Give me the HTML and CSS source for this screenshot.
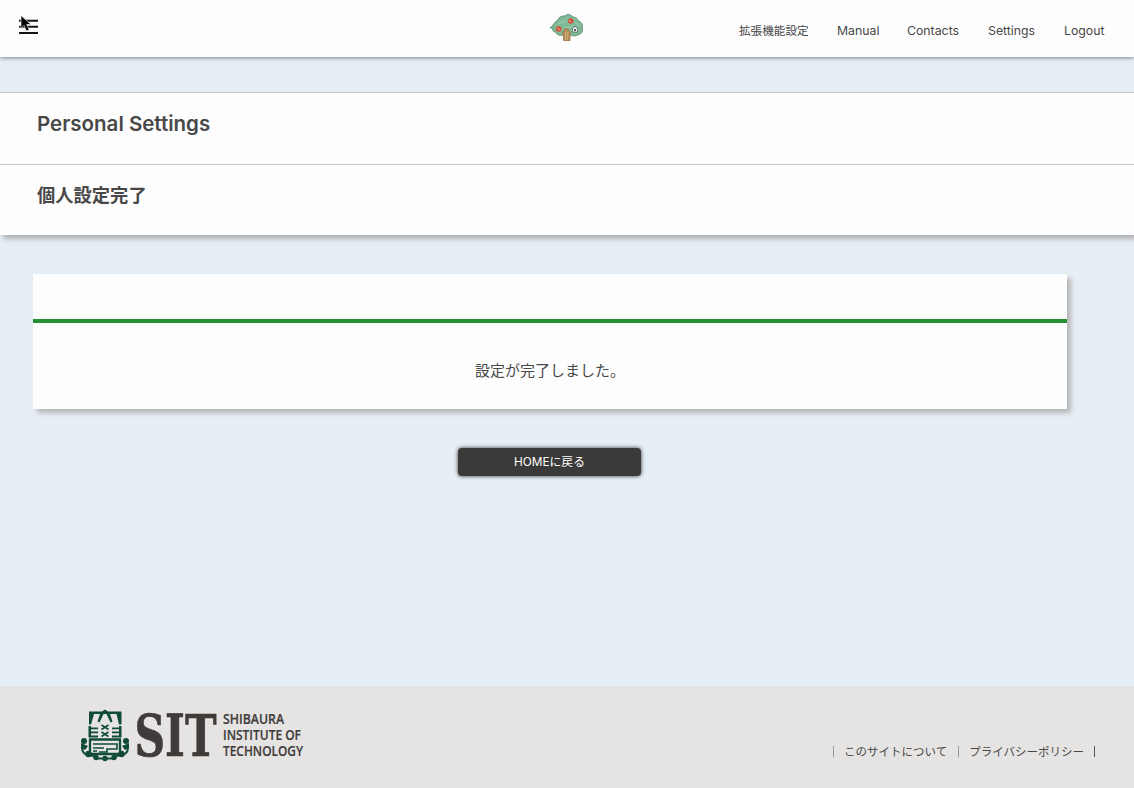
FILE: index.html
```
<!DOCTYPE html>
<html lang="ja">
<head>
<meta charset="utf-8">
<title>Personal Settings</title>
<link rel="stylesheet" href="styles.css">
</head>
<body>
<header class="topbar">
  <button class="menu" aria-label="Menu">
    <svg width="32" height="32" viewBox="0 0 32 32">
      <path d="M7 9.7H26M7 15.7H26M7 22H26" stroke="#151515" stroke-width="2"/>
      <path d="M9 4.5v13l3-3 2.4 5.5 2.8-1.2-2.5-5.3h4.3z" fill="#080808" stroke="#fff" stroke-width=".6"/>
    </svg>
  </button>
  <svg class="tree" width="36" height="30" viewBox="0 0 36 30">
    <path d="M1 15C5 12 5 9 9 7C10 3 14 3 16 3C19 0 22 2 24 4C28 4 29 7 29 8C33 9 34 12 33 14C35 19 31 22 28 22C25 24 22 22 20 22C18 24 15 23 14 22C10 23 7 21 7 19C4 19 3 17 4 15Z" fill="#7fb996" stroke="#5f9378" stroke-width="1"/>
    <path d="M9 10q5 1 7-3M15 14q6 2 9-2M26 10q3 0 4 3" fill="none" stroke="#9ccbae" stroke-width="1.2"/>
    <path d="M13 20l4.5-5 4.5 5-1 1v6.500h-6.500v-6.500z" fill="#b58d5d" stroke="#a26f43" stroke-width=".8"/>
    <path d="M16.500 19v8M18.700 19v8" stroke="#d3b77c" stroke-width=".8"/>
    <circle cx="21.8" cy="8" r="2.7" fill="#d94d3c"/><circle cx="9.7" cy="16" r="2.8" fill="#d94d3c"/>
    <path d="M20 7l2 2M8 15l3 2" stroke="#edb17c"/>
    <path d="M23.500 16l2.500-3 2.500 3v3h-5v-3z" fill="#f8f8f8" stroke="#4e6258" stroke-width=".7"/>
    <path d="M26 16v2" stroke="#222" stroke-width="1.5"/>
  </svg>
  <nav class="nav">
    <a class="nav-ja">拡張機能設定</a><a class="n-manual">Manual</a><a class="n-contacts">Contacts</a><a class="n-settings">Settings</a><a class="n-logout">Logout</a>
  </nav>
</header>
<main>
  <section class="titles">
    <h1>Personal Settings</h1>
    <h2>個人設定完了</h2>
  </section>
  <section class="card">
    <div class="card-head"></div>
    <p>設定が完了しました。</p>
  </section>
  <button class="home">HOMEに戻る</button>
</main>
<footer class="footer">
  <svg class="logo" width="226" height="56" viewBox="0 0 226 56">
    <g fill="#104b38">
      <path d="M10 2.500H23L26 .5l3 2H42.500V15.500H40L37.500 5H31L33.500 12.500L31.500 13.500L27.500 5H24.500L20.500 13.500L18.500 12.500L21 5H15L12 15.500H10Z"/>
      <path d="M9.500 17h2.500v1.500h7v1.800h-7v2.200h7v1.800h-7v2.200h7v2H9.500z"/>
      <path d="M42.500 17H40v1.500h-7v1.800h7v2.200h-7v1.800h7v2.200h-7v2h9.500z"/>
    </g>
    <g fill="none" stroke="#104b38" stroke-width="1.6">
      <path d="M22.500 16l7 4.500M29.500 16l-7 4.500M22.500 23l7 4.500M29.500 23l-7 4.500"/>
      <path d="M10 30.500H42M11 30V45M41 30V45M11 45H41" stroke-width="2.3"/>
      <path d="M14 35H38V40H28V43H20M14 39H25M14 42H18"/>
      <path d="M3 38Q3 45 9 46Q14 46 18 49.500H34Q38 46 43 46Q49 45 49 38" stroke-width="2"/>
    </g>
    <g fill="#104b38">
      <circle cx="5" cy="32" r="3"/><circle cx="47" cy="32" r="3"/>
      <path d="M2 34v5l4 2 3-4zM50 34v5l-4 2-3-4z"/>
      <circle cx="9.500" cy="45" r="3.200"/><circle cx="42.500" cy="45" r="3.200"/>
      <circle cx="17" cy="48.500" r="2.700"/><circle cx="35" cy="48.500" r="2.700"/><circle cx="26" cy="49.500" r="2.700"/>
    </g>
    <text class="sit" x="55.500" y="47" textLength="82" lengthAdjust="spacingAndGlyphs">SIT</text>
    <g class="univ">
      <text x="144" y="15" textLength="61" lengthAdjust="spacingAndGlyphs">SHIBAURA</text>
      <text x="144" y="31" textLength="78" lengthAdjust="spacingAndGlyphs">INSTITUTE OF</text>
      <text x="144" y="47" textLength="80" lengthAdjust="spacingAndGlyphs">TECHNOLOGY</text>
    </g>
  </svg>
  <div class="links"><i></i><a class="about">このサイトについて</a><i></i><a class="privacy">プライバシーポリシー</a><i class="last"></i></div>
</footer>
</body>
</html>
```

FILE: styles.css
```
* { box-sizing: border-box; }
body {
  margin: 0;
  height: 788px;
  display: flex;
  flex-direction: column;
  overflow: hidden;
  background: #e7eff6;
  color: #484848;
  font-family: Inter, "Noto Sans CJK JP", sans-serif;
}
.topbar {
  height: 57px;
  flex: none;
  display: grid;
  grid-template-columns: 1fr 36px 1fr;
  background: #fdfdfd;
  box-shadow: 0 1px 4px rgba(60, 65, 75, .6);
}
.menu {
  width: 32px;
  height: 32px;
  margin: 11px 0 0 12px;
  padding: 0;
  border: 0;
  background: none;
}
.menu svg { display: block; }
.tree { margin-top: 13px; }
.nav {
  display: flex;
  justify-content: flex-end;
  gap: 28px;
  padding: 21px 28px 0 0;
  font-size: 12.3px;
  line-height: 20px;
  white-space: nowrap;
}
.nav a { flex: none; }
.nav-ja { width: 70px; font-size: 11.6px; }
.n-manual { width: 42px; }
.n-contacts { width: 53px; }
.n-settings { width: 48px; }
.n-logout { width: 42px; }
main { flex: 1; }
.titles {
  margin-top: 35px;
  background: #fdfdfd;
  box-shadow: 3px 4px 5px #b0b0b0;
}
h1, h2 {
  height: 72px;
  margin: 0;
  padding: 15px 0 0 37px;
  border-top: 1px solid #c9c9c9;
  line-height: 30px;
}
h1 { padding-top: 16px; font-size: 20.5px; font-weight: 600; }
h2 { font-size: 18.3px; height: 71px; }
.card {
  width: 1034px;
  height: 135px;
  margin: 39px 0 0 33px;
  background: #fdfdfd;
  box-shadow: 4px 4px 5px #b5b5b5;
}
.card-head { height: 49px; border-bottom: 4px solid #258f34; }
.card p {
  margin: 0;
  padding-top: 36px;
  text-align: center;
  font-size: 15px;
  line-height: 24px;
}
.home {
  display: block;
  width: 183px;
  height: 28px;
  margin: 39px 0 0 458px;
  padding: 0;
  border: 0;
  border-radius: 4px;
  background: #3a3a3a;
  color: #fff;
  box-shadow: 0 0 4px #333;
  font: 11.8px/28px Inter, "Noto Sans CJK JP", sans-serif;
}
.footer {
  height: 102px;
  flex: none;
  display: flex;
  justify-content: space-between;
  padding: 23px 39px 0 79px;
  background: #e5e4e3;
}
.logo { overflow: visible; }
.sit { font: bold 57px "DejaVu Serif", serif; fill: #403b3a; stroke: #403b3a; stroke-width: .7px; }
.univ { font: 600 13.5px "Open Sans", sans-serif; fill: #403b3a; stroke: #403b3a; stroke-width: .2px; }
.links {
  display: flex;
  align-items: center;
  height: 20px;
  margin-top: 32px;
  font-size: 11.5px;
  white-space: nowrap;
}
.links i { width: 1px; height: 11px; background: #999; }
.links .last { background: #555; }
.links a { margin: 0 10px; }
.links .about { margin-right: 11px; }
```
